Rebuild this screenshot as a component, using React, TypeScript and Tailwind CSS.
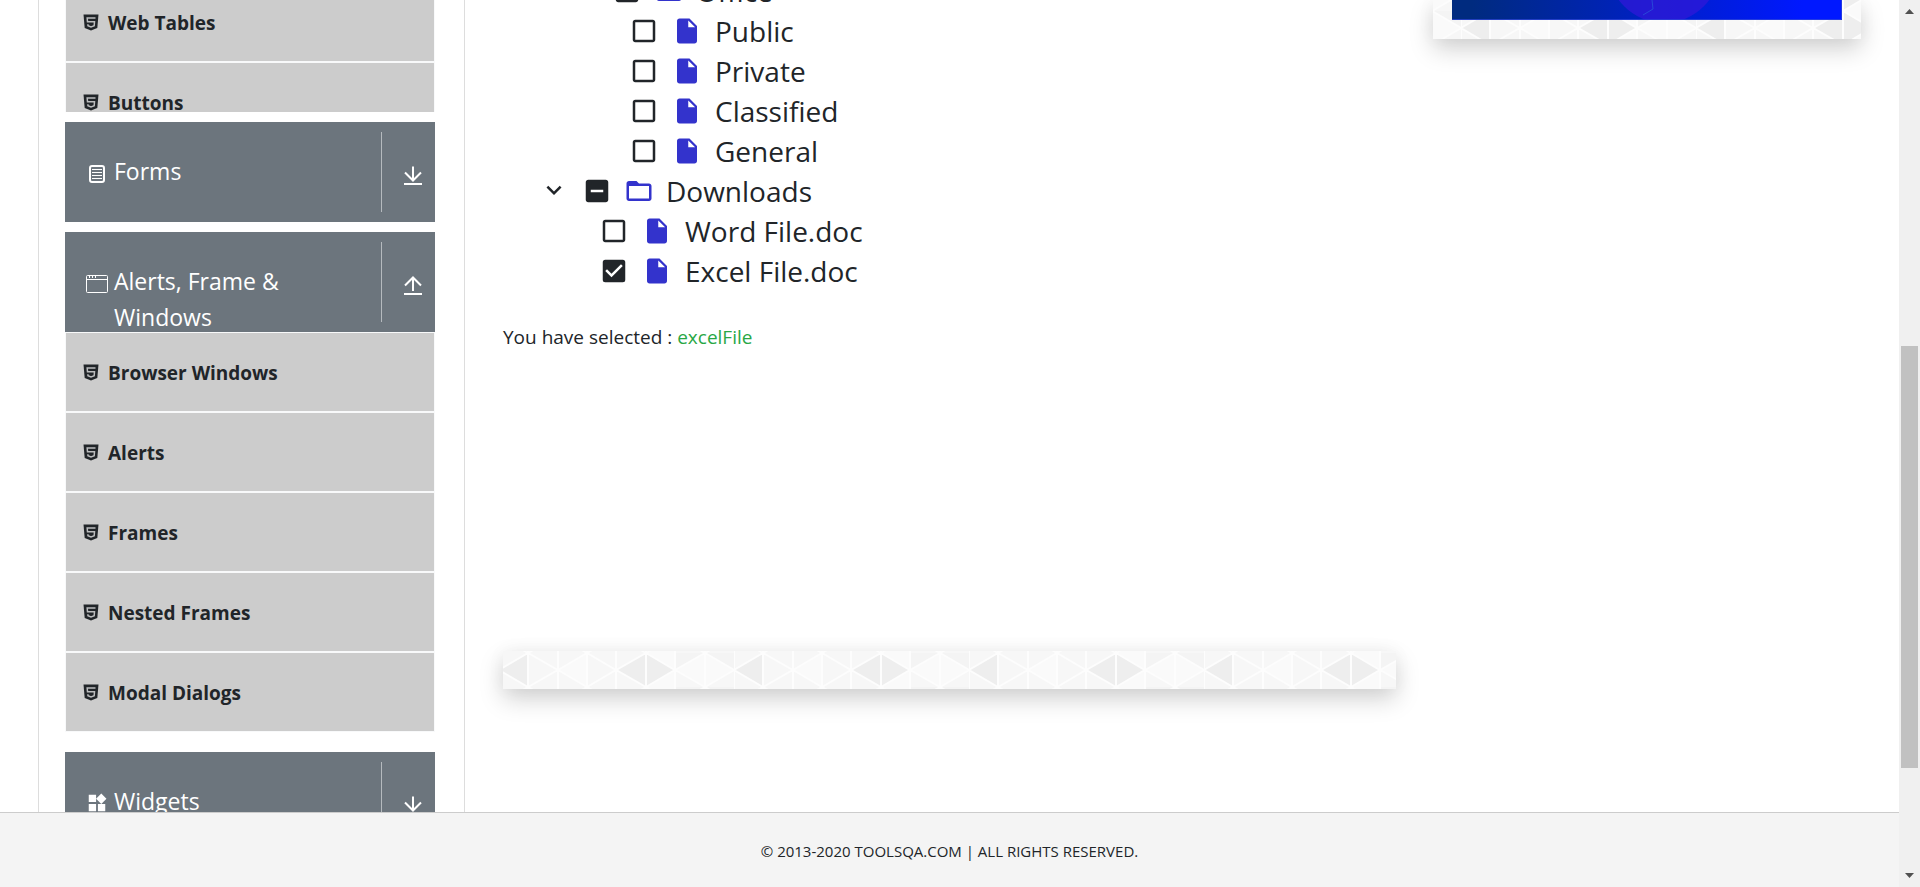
import React, { useId } from 'react';
import {
  MdCheckBox, MdCheckBoxOutlineBlank, MdIndeterminateCheckBox, MdFolderOpen,
  MdInsertDriveFile, MdExpandMore, MdWidgets,
} from 'react-icons/md';

const Html5Icon = () => (
  <svg viewBox="0 0 16 17" className="h-[17px] w-4 shrink-0" aria-hidden="true">
    <path fill="currentColor" d="M0.500 0.500h15l-1.200 13.500L8 16.500l-6.300-2.500z" />
    <path fill="none" stroke="#bcbdbe" strokeWidth="1.500" d="M12.500 4H4.200l.3 3.800h7l-.3 4L8 12.900l-3-1.100-.1-1.600" />
  </svg>
);

const FormIcon = () => (
  <svg viewBox="0 0 22 22" className="size-[22px]" fill="none" stroke="currentColor" aria-hidden="true">
    <rect x="4" y="4" width="14" height="16" rx="2" strokeWidth="2" />
    <path d="M6 7.500h10M6 10.500h10M6 13.500h10M6 16.500h10" strokeWidth="1" />
  </svg>
);

const WindowIcon = () => (
  <svg viewBox="0 0 22 22" className="size-[22px]" fill="none" stroke="currentColor" aria-hidden="true">
    <rect x="0.500" y="3.500" width="21" height="17" rx="1" />
    <path d="M1 7.500h20M3.500 4v2M6.500 4v2M9.500 4v2" />
  </svg>
);

const ArrowIcon = ({ up = false }: { up?: boolean }) => (
  <svg viewBox="0 0 20 20" className="size-5" fill="none" stroke="currentColor" strokeWidth="2" aria-hidden="true">
    <path d={up ? 'M10 15V1.500M2 9.500l8-8 8 8' : 'M10 0.500V14M2 6.500l8 8 8-8'} />
    <path d="M1 18h18" />
  </svg>
);

const panelShadow = 'shadow-[0_10px_24px_rgba(0,0,0,0.18),0_0_20px_rgba(0,0,0,0.04)]';

function TriangleBackdrop({ x, y }: { x: number; y: number }) {
  const id = useId();
  return (
    <svg className="absolute inset-0 size-full" aria-hidden="true">
      <defs>
        <pattern id={id} width="235" height="34" x={x} y={y} patternUnits="userSpaceOnUse">
          <rect width="235" height="34" fill="#f7f7f7" />
          <path fill="#eeeeee" d="M0 17L29 0v34zM117 17l30-17v34zM147 0l29 17-29 17z" />
          <path fill="#fafafa" d="M59 17L88 0v34zM176 17l30-17v34zM147 0h29v17zM206 0l29 17-29 17zM147 34h29V17z" />
          <path fill="#f4f4f4" d="M176 0h30l-30 17zM206 0h29v17z" />
          <path stroke="#fdfdfd" strokeWidth="2" fill="none" d="M0 17L29 0l30 17L88 0l29 17 30-17 29 17 30-17 29 17M0 17l29 17 30-17 29 17 29-17 30 17 29-17 30 17 29-17M29 0v34M88 0v34M147 0v34M206 0v34M59 0v34M117 0v34M176 0v34M0 0v34" />
        </pattern>
      </defs>
      <rect width="100%" height="100%" fill={`url(#${id})`} />
    </svg>
  );
}

function GroupHeader({ icon, title, open = false }: { icon: React.ReactNode; title: string; open?: boolean }) {
  return (
    <button type="button" aria-expanded={open} className="flex h-[100px] w-full shrink-0 items-start overflow-hidden bg-[#6c757d] text-left text-white">
      <span className="mt-10 ml-[21px] flex w-7 shrink-0">{icon}</span>
      <span className="mt-[31px] w-[190px] text-[23px] leading-9">{title}</span>
      <span className="mt-2.5 ml-auto flex h-20 w-[54px] items-center border-l border-[#b5babe] pt-2 pl-[21px]">
        <ArrowIcon up={open} />
      </span>
    </button>
  );
}

function ItemList({ items }: { items: string[] }) {
  return (
    <ul>
      {items.map((t) => (
        <li key={t} className="h-20 border border-[#f8f9fa] bg-[#cccccc]">
          <a href="#" className="flex h-full items-start gap-[9px] pt-[26px] pl-[17px] text-[19px] leading-7 font-bold">
            <span className="flex h-[26px] items-center"><Html5Icon /></span>
            <span>{t}</span>
          </a>
        </li>
      ))}
    </ul>
  );
}

type State = 'off' | 'on' | 'half';

function TreeRow({ label, state, folder = false, expandable = false, indent }: {
  label: string; state: State; folder?: boolean; expandable?: boolean; indent: string;
}) {
  const Box = state === 'on' ? MdCheckBox : state === 'half' ? MdIndeterminateCheckBox : MdCheckBoxOutlineBlank;
  return (
    <li className={`flex h-10 items-start gap-[13px] ${indent}`}>
      {expandable && (
        <button type="button" aria-label={`Toggle ${label}`} className="mt-[3px] size-[30px]"><MdExpandMore size={30} /></button>
      )}
      <label className={`relative flex items-start ${folder ? 'gap-3' : 'gap-[13px]'}`}>
        <input
          type="checkbox"
          className="absolute mt-1 size-[30px] opacity-0"
          defaultChecked={state === 'on'}
          ref={(el) => { if (el) el.indeterminate = state === 'half'; }}
        />
        <Box size={30} className="mt-1" />
        {folder ? <MdFolderOpen size={30} className="mt-1 text-[#3333cc]" /> : <MdInsertDriveFile size={30} className="mt-1 text-[#3333cc]" />}
        <span className="text-[28px] leading-[39px]">{label}</span>
      </label>
    </li>
  );
}

export default function App() {
  return (
    <div className="flex h-screen overflow-hidden bg-white font-['Segoe_UI','Open_Sans',sans-serif] text-[#212529]">
      <div className="flex min-w-0 flex-1 flex-col">
        <main className="flex min-h-0 flex-1 overflow-hidden pl-[38px]">
          <aside className="flex w-[427px] shrink-0 flex-col overflow-hidden border-x border-[#dddddd] pr-[29px] pl-[26px]">
            <div className="h-[112px] shrink-0 overflow-hidden">
              <div className="-mt-[18px]"><ItemList items={['Web Tables', 'Buttons']} /></div>
            </div>
            <div className="mt-2.5 shrink-0"><GroupHeader icon={<FormIcon />} title="Forms" /></div>
            <div className="mt-2.5 shrink-0">
              <GroupHeader icon={<WindowIcon />} title="Alerts, Frame & Windows" open />
              <ItemList items={['Browser Windows', 'Alerts', 'Frames', 'Nested Frames', 'Modal Dialogs']} />
            </div>
            <div className="mt-5 shrink-0"><GroupHeader icon={<MdWidgets size={22} />} title="Widgets" /></div>
          </aside>

          <section className="ml-[38px] min-w-0 flex-1">
            <ul className="-mt-7">
              <TreeRow label="Office" state="half" folder indent="pl-[109px]" />
              <TreeRow label="Public" state="off" indent="pl-[126px]" />
              <TreeRow label="Private" state="off" indent="pl-[126px]" />
              <TreeRow label="Classified" state="off" indent="pl-[126px]" />
              <TreeRow label="General" state="off" indent="pl-[126px]" />
              <TreeRow label="Downloads" state="half" folder expandable indent="pl-9" />
              <TreeRow label="Word File.doc" state="off" indent="pl-24" />
              <TreeRow label="Excel File.doc" state="on" indent="pl-24" />
            </ul>
            <p className="mt-[29px] text-[19px] leading-8">
              You have selected : <span className="text-[#28a745]">excelFile</span>
            </p>
            <div className={`relative mt-[298px] h-[38px] ${panelShadow}`}>
              <TriangleBackdrop x={-4} y={2} />
            </div>
          </section>

          <aside className="mr-[38px] ml-[37px] w-[428px] shrink-0">
            <div className={`relative h-[39px] px-[19px] ${panelShadow}`}>
              <TriangleBackdrop x={28} y={11} />
              <svg viewBox="0 0 390 20" preserveAspectRatio="none" className="relative h-5 w-full" role="img" aria-label="Advertisement">
                <defs>
                  <linearGradient id="banner">
                    <stop offset="0.05" stopColor="#002b7f" />
                    <stop offset="0.9" stopColor="#0018ff" />
                  </linearGradient>
                </defs>
                <rect width="390" height="20" fill="url(#banner)" />
                <circle cx="212" cy="-33" r="56" fill="#3018d8" fillOpacity="0.75" />
                <path d="M200 0l1 9-10 6" fill="none" stroke="#2848d8" />
                <path d="M0 19.500h389.500V0" fill="none" stroke="#3048d8" strokeOpacity="0.7" />
              </svg>
            </div>
          </aside>
        </main>
        <footer className="flex h-[75px] shrink-0 items-center justify-center border-t border-[#cccccc] bg-[#f4f4f4] pt-0.5 text-[15px]">
          © 2013-2020 TOOLSQA.COM | ALL RIGHTS RESERVED.
        </footer>
      </div>

      <div className="flex w-[21px] shrink-0 flex-col items-center bg-[#f0f0f0] py-2" aria-hidden="true">
        <svg viewBox="0 0 9 5" className="mt-px h-[5px] w-[9px]"><path fill="#505050" d="M0 5L4.500 0 9 5z" /></svg>
        <div className="flex w-full flex-1 flex-col px-0.5">
          <div className="grow-[332]" />
          <div className="grow-[423] bg-[#c1c1c1]" />
          <div className="grow-[105]" />
        </div>
        <svg viewBox="0 0 9 5" className="mb-px h-[5px] w-[9px]"><path fill="#505050" d="M0 0L4.500 5 9 0z" /></svg>
      </div>
    </div>
  );
}
